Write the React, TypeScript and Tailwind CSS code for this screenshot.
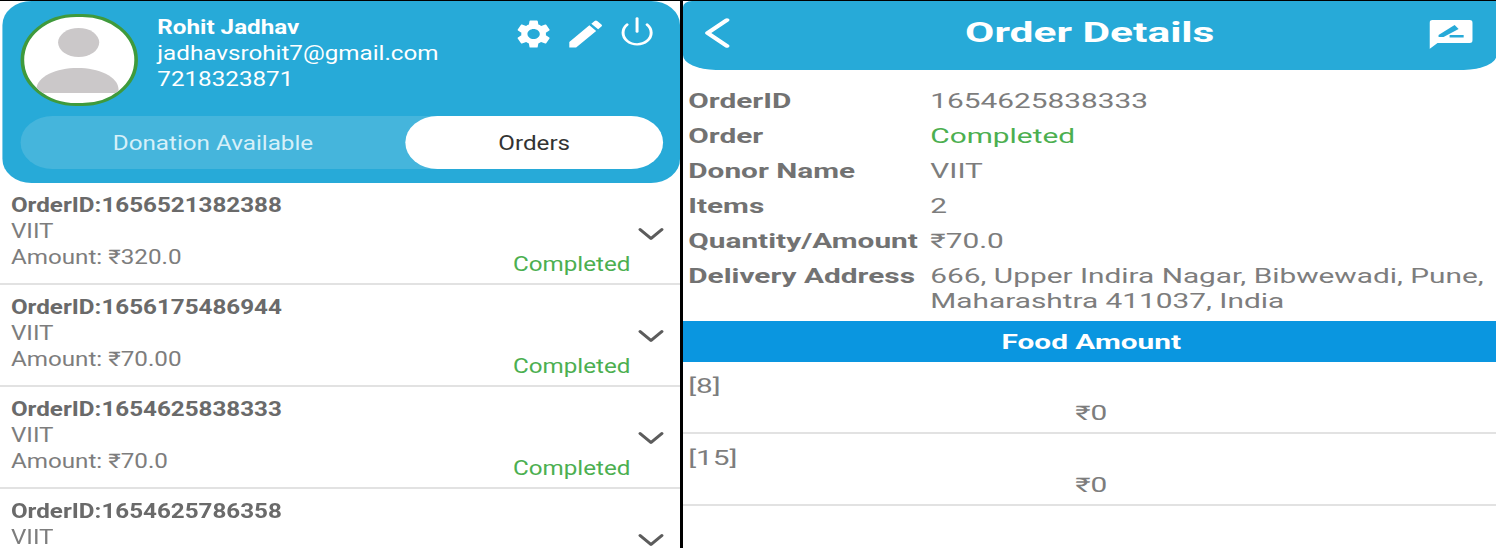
import React from 'react';
import { ChevronDown, ChevronLeft, Power } from 'lucide-react';
import { MdEdit, MdSettings } from 'react-icons/md';

const orders = [
  { id: '1656521382388', amount: '₹320.0' },
  { id: '1656175486944', amount: '₹70.00' },
  { id: '1654625838333', amount: '₹70.0' },
  { id: '1654625786358', amount: '' },
];

const details = [
  { label: 'OrderID', value: '1654625838333' },
  { label: 'Order', value: 'Completed', green: true },
  { label: 'Donor Name', value: 'VIIT' },
  { label: 'Items', value: '2' },
  { label: 'Quantity/Amount', value: '₹70.0' },
];

function Avatar() {
  return (
    <div className="w-[97px] h-[92px] rounded-full bg-white border-[3px] border-[#3f9a3c] shrink-0 overflow-hidden">
      <svg viewBox="3 3 91 86" className="w-full h-full">
        <ellipse cx="48" cy="28.5" rx="17" ry="14.5" fill="#cbc8c9" />
        <path d="M13 76 C13 62 30 54 47 54 C64 54 81 62 81 76 Q81 79 78 79 H16 Q13 79 13 76 Z" fill="#cbc8c9" />
      </svg>
    </div>
  );
}

function OrderRow({ id, amount }: { id: string; amount: string }) {
  return (
    <div className="relative h-[102px] border-b-[2px] border-[#e2e2e2] pl-[9px] pt-[9px] text-[#7d7d7d] text-[20px] leading-[26px]">
      <div className="font-bold text-[#6a6a6a]">OrderID:{id}</div>
      <div>VIIT</div>
      {amount && <div>Amount: {amount}</div>}
      <ChevronDown className="absolute right-[6px] top-[33px] w-[36px] h-[36px] text-[#5c5c5c]" strokeWidth={1.8} />
      {amount && <div className="absolute right-[41px] top-[68px] text-[#4caf50]">Completed</div>}
    </div>
  );
}

export default function App(): React.ReactElement {
  return (
    <div className="w-[1496px] h-[548px] overflow-hidden bg-black flex gap-[3px] font-['Roboto',sans-serif]">
      {/* the shot is stretched sideways, each phone screen by its own factor */}
      <div className="w-[680px] h-full overflow-hidden">
        <div className="w-[562px] h-full bg-white origin-left scale-x-[1.21]">
          <div className="h-[182px] mt-px ml-[2px] bg-[#27aad8] rounded-[24px] pl-[15px] pr-[14px] pt-[13px] flex flex-col">
            <div className="flex h-[102px]">
              <Avatar />
              <div className="ml-[16px] text-white text-[20px] leading-[26px] whitespace-nowrap">
                <div className="font-bold">Rohit Jadhav</div>
                <div>jadhavsrohit7@gmail.com</div>
                <div>7218323871</div>
              </div>
              <div className="ml-auto pt-[2px] flex text-white h-fit">
                <div className="w-[43px] h-[36px] flex items-center justify-center"><MdSettings size={34} /></div>
                <div className="w-[43px] h-[36px] flex items-center justify-center"><MdEdit size={36} /></div>
                <div className="w-[43px] h-[36px] flex items-center justify-center -mt-[3px]"><Power size={31} strokeWidth={1.9} /></div>
              </div>
            </div>
            <div className="h-[53px] rounded-full bg-[#45b5dc] flex text-[20px]">
              <div className="w-[318px] pt-px flex items-center justify-center text-[#d6f0f9]">Donation Available</div>
              <div className="w-[213px] pt-px rounded-full bg-white flex items-center justify-center text-[#333333]">Orders</div>
            </div>
          </div>
          <div>
            {orders.map((o) => (
              <OrderRow key={o.id} id={o.id} amount={o.amount} />
            ))}
          </div>
        </div>
      </div>

      <div className="flex-1 h-full overflow-hidden">
        <div className="w-[546px] h-full bg-white origin-left scale-x-[1.49]">
          <div className="h-[69px] mt-px bg-[#27aad8] rounded-b-[22px_15px] rounded-tl-[6px] relative flex items-center justify-center text-white">
            <ChevronLeft className="absolute left-[-3px] top-[6px] w-[52px] h-[52px]" strokeWidth={1.6} />
            <div className="font-bold text-[28.5px] -mt-[5px]">Order Details</div>
            <svg viewBox="0 0 43 30" preserveAspectRatio="none" className="absolute right-[16px] top-[18px] w-[29px] h-[30px]">
              <path d="M3 1 H40 Q43 1 43 4 V21 Q43 24 40 24 H8 L0 30 V4 Q0 1 3 1 Z" fill="white" />
              <path d="M9 16 L25 6 L29 10 L14 18 L9 18 Z" fill="#27aad8" />
              <rect x="20" y="16" width="14" height="2.5" fill="#27aad8" />
            </svg>
          </div>

          <div className="pl-[3.5px] pt-[13px] text-[20px] text-[#7d7d7d] whitespace-nowrap">
            {details.map((d) => (
              <div key={d.label} className="flex h-[35px] items-center">
                <div className="w-[162.5px] font-bold text-[#727272]">{d.label}</div>
                <div className={d.green ? 'text-[#4caf50]' : ''}>{d.value}</div>
              </div>
            ))}
            <div className="flex pt-[6px] leading-[25px] h-[63px]">
              <div className="w-[162.5px] font-bold text-[#727272]">Delivery Address</div>
              <div>
                666, Upper Indira Nagar, Bibwewadi, Pune,
                <br />
                Maharashtra 411037, India
              </div>
            </div>
          </div>

          <div className="h-[41px] pt-px bg-[#0a96e0] flex items-center justify-center text-white font-bold text-[20px] pl-[2px]">Food Amount</div>

          {['[8]', '[15]'].map((item) => (
            <div key={item} className="h-[72px] border-b-[2px] border-[#e2e2e2] text-[20px] text-[#7d7d7d] flex flex-col">
              <div className="pl-[3.5px] pt-[10px] leading-[28px]">{item}</div>
              <div className="text-center pl-[2px] leading-[26px]">₹0</div>
            </div>
          ))}
        </div>
      </div>
    </div>
  );
}
